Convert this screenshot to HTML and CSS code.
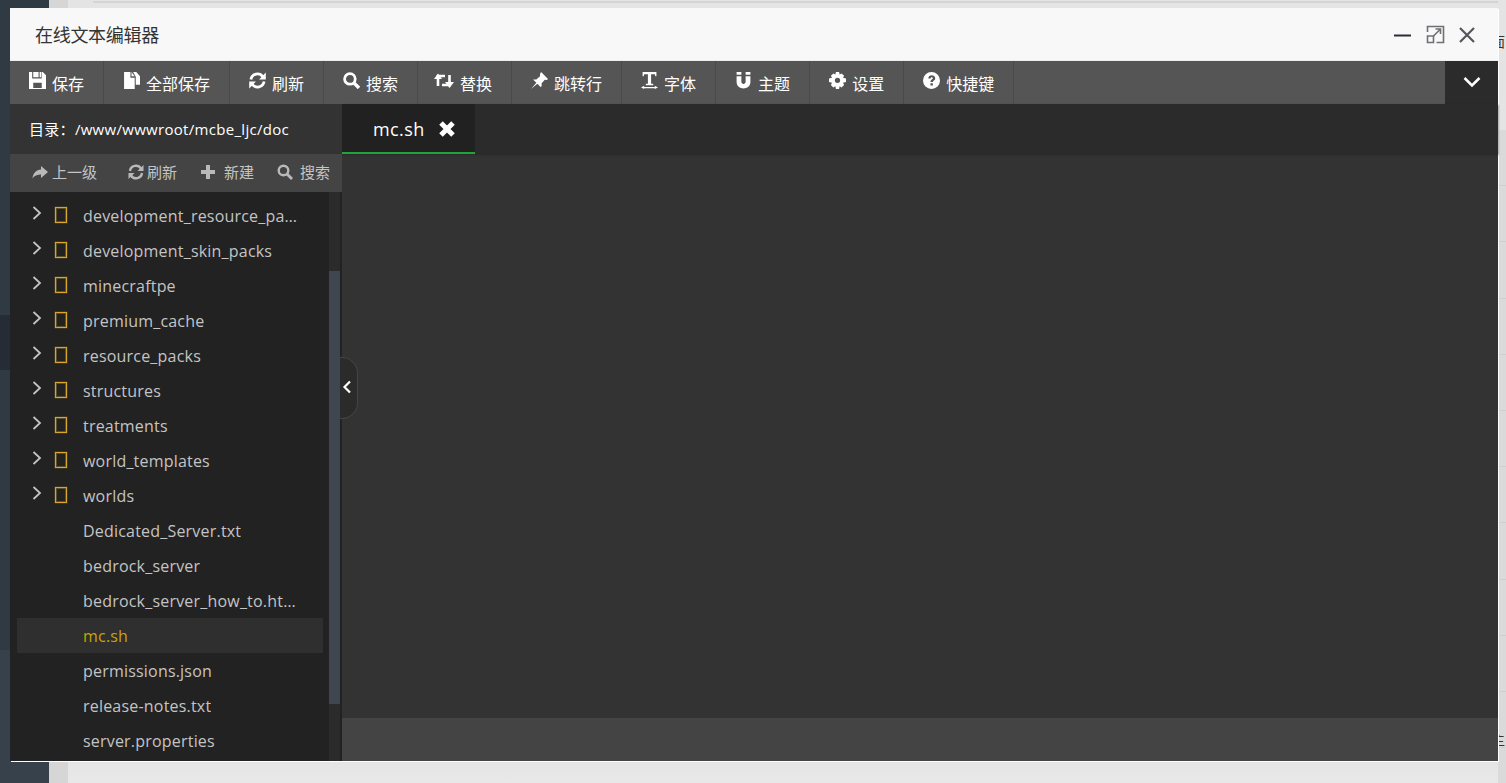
FILE: index.html
```html
<!DOCTYPE html>
<html lang="zh">
<head>
<meta charset="utf-8">
<title>在线文本编辑器</title>
<link rel="stylesheet" href="styles.css">
</head>
<body>
<div class="page">
  <div class="page-side"><div class="ps-a"></div><div class="ps-b"></div><div class="ps-c"></div><div class="ps-d"></div></div>
  <div class="page-gutter"></div>
  <div class="page-main"><div class="page-line"></div></div>
  <div class="page-right"><span class="frag frag-a">面</span><span class="frag frag-b">主</span></div>
</div>
<section class="win">
  <header class="titlebar">
    <span class="title">在线文本编辑器</span>
    <div class="winbtns">
      <svg class="wb" viewBox="0 0 20 20"><path d="M1 10.500H18" stroke="#2c2c38" stroke-width="2"/></svg>
      <svg class="wb" viewBox="0 0 20 20" fill="none" stroke="#6f7074" stroke-width="1.600"><path d="M2.500 7V1.500H18.500V17.500H11.500"/><path d="M2.500 11H8.500V17.500H2.500Z"/><path d="M8.500 11L15.500 4M10.500 4H15.500V9"/></svg>
      <svg class="wb" viewBox="0 0 20 20"><path d="M3 3L17 17M17 3L3 17" stroke="#55565c" stroke-width="2.200"/></svg>
    </div>
  </header>
  <nav class="menubar">
    <div class="menu">
      <a class="mi"><svg class="ic" viewBox="0 0 16 16"><path fill="#fff" fill-rule="evenodd" d="M0 0H3V6H12V0H13L16 3V16H0ZM4 0H9V5H4ZM10 0H11.500V5H10ZM4 10V15H12V10Z"/></svg>保存</a>
      <a class="mi"><svg class="ic" viewBox="0 0 16 16"><path fill="#fff" d="M1 0H7V5.500H11V16H1ZM8 0L11 4H8ZM12 0H12.500L16 4V12H12V4.500L9.500 0Z"/></svg>全部保存</a>
      <a class="mi"><svg class="ic" viewBox="0 0 16 16" fill="none" stroke="#fff" stroke-width="2.600"><path d="M1.800 7A6.200 6.200 0 0 1 13 4.500"/><path d="M14.200 9A6.200 6.200 0 0 1 3 11.500"/><path fill="#fff" stroke="none" d="M15.800 .5V7H9.500ZM.2 15.500V9H6.500Z"/></svg>刷新</a>
      <a class="mi"><svg class="ic" viewBox="0 0 16 16" fill="none" stroke="#fff"><circle cx="6.500" cy="6.500" r="5" stroke-width="2.600"/><path d="M10 10L15 15" stroke-width="3.200"/></svg>搜索</a>
      <a class="mi"><svg class="ic wide" viewBox="0 0 20 16" fill="none" stroke="#fff" stroke-width="2.600"><path d="M4 13.500V3.500H11"/><path d="M15.500 2.500V12.500H8"/><path fill="#fff" stroke="none" d="M0 6.500L4 1L8 6.500ZM11 9.500L15.500 15.500L20 9.500Z"/></svg>替换</a>
      <a class="mi"><svg class="ic" viewBox="0 0 16 16"><path fill="#fff" d="M9.500 0L16 6.500L14.800 7.500L13 7.200L10 10.500L10 13.500L9 14L2 7L5 7L8.500 4L8.500 1.800ZM5 10L6 11L0 16Z"/></svg>跳转行</a>
      <a class="mi"><svg class="ic" viewBox="0 0 16 16"><path fill="#fff" d="M1.500 0H14.500V4H13.500L13 2H9.500V11H11.500V12.500H4.500V11H6.500V2H3L2.500 4H1.500ZM0 14.500L3 13V14H13V13L16 14.500L13 16V15.200H3V16Z"/></svg>字体</a>
      <a class="mi"><svg class="ic" viewBox="0 0 16 16"><path fill="#fff" d="M1.500 0H6V2.500H1.500ZM10 0H14.500V2.500H10ZM1.500 4H6V9.500C6 11.800 10 11.800 10 9.500V4H14.500V9.500C14.500 17.500 1.500 17.500 1.500 9.500Z"/></svg>主题</a>
      <a class="mi"><svg class="ic" viewBox="0 0 16 16"><path fill="#fff" fill-rule="evenodd" d="M6.500 0H9.500L10 2.300L11.800 1.300L14.200 3.500L13.200 5.300L16 6V9.500L13.200 10.200L14.200 12.200L11.800 14.500L10 13.500L9.500 16H6.500L6 13.500L4 14.500L1.800 12.200L2.800 10.200L0 9.500V6L2.800 5.300L1.800 3.500L4.200 1.300L6 2.300ZM8 5.300A2.500 2.500 0 1 0 8 10.300A2.500 2.500 0 1 0 8 5.300Z"/></svg>设置</a>
      <a class="mi"><svg class="ic" viewBox="0 0 16 16"><path fill="#fff" fill-rule="evenodd" d="M8 0A8 8 0 1 0 8 16A8 8 0 1 0 8 0ZM5 6C5 2 11.500 2.300 11.500 5.800C11.500 8 9.300 8 9.300 9.500H7C7 7 9.200 7 9.200 5.800C9.200 4.600 7.200 4.700 7.200 6ZM7 10.500H9.300V12.800H7Z"/></svg>快捷键</a>
    </div>
    <button class="more"><svg viewBox="0 0 18 12" class="more-ic"><path d="M1.500 2L9 9.500L16.500 2" fill="none" stroke="#fff" stroke-width="2.500"/></svg></button>
  </nav>
  <div class="body">
    <aside class="side">
      <div class="path">目录：/www/wwwroot/mcbe_ljc/doc</div>
      <div class="tools">
        <a class="t t1"><svg class="tic" viewBox="0 0 16 16"><path fill="#b9b9b9" d="M9 2L16 8L9 14V10.500C5 10.500 2.500 11.500 .5 14.500C1 9 4.500 5.800 9 5.500Z"/></svg>上一级</a>
        <a class="t t2"><svg class="tic" viewBox="0 0 16 16" fill="none" stroke="#b9b9b9" stroke-width="2.400"><path d="M2 7A6 6 0 0 1 13 4.500"/><path d="M14 9A6 6 0 0 1 3 11.500"/><path fill="#b9b9b9" stroke="none" d="M15.500 1V7H9.500ZM.5 15V9H6.500Z"/></svg>刷新</a>
        <a class="t t3"><svg class="tic" viewBox="0 0 16 16"><path fill="#b9b9b9" d="M6 1H10V6H15V10H10V15H6V10H1V6H6Z"/></svg>新建</a>
        <a class="t t4"><svg class="tic" viewBox="0 0 16 16" fill="none" stroke="#b9b9b9"><circle cx="6.500" cy="6.500" r="4.800" stroke-width="2.400"/><path d="M10 10L15 15" stroke-width="2.800"/></svg>搜索</a>
      </div>
      <div class="tree-wrap">
        <ul class="tree">
          <li class="row"><svg class="chev" viewBox="0 0 10 14"><path d="M1.500 1L8 7L1.500 13" fill="none" stroke="#c4c4c4" stroke-width="1.800"/></svg><i class="folder"></i><span class="name">development_resource_packs</span></li>
          <li class="row"><svg class="chev" viewBox="0 0 10 14"><path d="M1.500 1L8 7L1.500 13" fill="none" stroke="#c4c4c4" stroke-width="1.800"/></svg><i class="folder"></i><span class="name">development_skin_packs</span></li>
          <li class="row"><svg class="chev" viewBox="0 0 10 14"><path d="M1.500 1L8 7L1.500 13" fill="none" stroke="#c4c4c4" stroke-width="1.800"/></svg><i class="folder"></i><span class="name">minecraftpe</span></li>
          <li class="row"><svg class="chev" viewBox="0 0 10 14"><path d="M1.500 1L8 7L1.500 13" fill="none" stroke="#c4c4c4" stroke-width="1.800"/></svg><i class="folder"></i><span class="name">premium_cache</span></li>
          <li class="row"><svg class="chev" viewBox="0 0 10 14"><path d="M1.500 1L8 7L1.500 13" fill="none" stroke="#c4c4c4" stroke-width="1.800"/></svg><i class="folder"></i><span class="name">resource_packs</span></li>
          <li class="row"><svg class="chev" viewBox="0 0 10 14"><path d="M1.500 1L8 7L1.500 13" fill="none" stroke="#c4c4c4" stroke-width="1.800"/></svg><i class="folder"></i><span class="name">structures</span></li>
          <li class="row"><svg class="chev" viewBox="0 0 10 14"><path d="M1.500 1L8 7L1.500 13" fill="none" stroke="#c4c4c4" stroke-width="1.800"/></svg><i class="folder"></i><span class="name">treatments</span></li>
          <li class="row"><svg class="chev" viewBox="0 0 10 14"><path d="M1.500 1L8 7L1.500 13" fill="none" stroke="#c4c4c4" stroke-width="1.800"/></svg><i class="folder"></i><span class="name">world_templates</span></li>
          <li class="row"><svg class="chev" viewBox="0 0 10 14"><path d="M1.500 1L8 7L1.500 13" fill="none" stroke="#c4c4c4" stroke-width="1.800"/></svg><i class="folder"></i><span class="name">worlds</span></li>
          <li class="row file"><span class="name">Dedicated_Server.txt</span></li>
          <li class="row file"><span class="name">bedrock_server</span></li>
          <li class="row file"><span class="name">bedrock_server_how_to.html</span></li>
          <li class="row file active"><span class="name">mc.sh</span></li>
          <li class="row file"><span class="name">permissions.json</span></li>
          <li class="row file"><span class="name">release-notes.txt</span></li>
          <li class="row file"><span class="name">server.properties</span></li>
        </ul>
        <div class="scroll"><div class="thumb"></div></div>
      </div>
      <button class="collapse"><svg viewBox="0 0 10 14" class="col-ic"><path d="M8 1.500L2.500 7L8 12.500" fill="none" stroke="#fff" stroke-width="2.200"/></svg></button>
    </aside>
    <main class="editor">
      <div class="tabs">
        <div class="tab">mc.sh<svg class="tab-x" viewBox="0 0 16 16"><path d="M3.200 3.200L12.800 12.800M12.800 3.200L3.200 12.800" stroke="#fff" stroke-width="4"/></svg></div>
      </div>
      <div class="code"></div>
      <div class="status"></div>
    </main>
  </div>
</section>
</body>
</html>
```
FILE: styles.css
```css
* { box-sizing: border-box; }
html, body { margin: 0; height: 100%; overflow: hidden; }
body { font-family: "Open Sans", "Noto Sans CJK SC", sans-serif; background: #e0e0e0; }
a { color: inherit; text-decoration: none; }
button { border: 0; padding: 0; cursor: pointer; }

.page { display: flex; height: 783px; }
.page-side { width: 49px; flex: none; display: flex; flex-direction: column; }
.ps-a { height: 315px; background: #303a43; }
.ps-b { height: 55px; background: #262c36; }
.ps-c { height: 280px; background: #2f3a43; }
.ps-d { flex: 1; background: #37414b; }
.page-gutter { width: 19px; flex: none; background: #d6d6d6; }
.page-main { flex: 1; background: linear-gradient(180deg, #e4e4e4, #dedede 90%, #e8e8e8); }
.page-line { height: 2px; margin: 1px 0 0 25px; background: #d4d4d4; }
.page-right { width: 8px; flex: none; overflow: hidden; display: flex; flex-direction: column; align-items: flex-start;
  background: repeating-linear-gradient(180deg, #dadada 0, #dadada 55.2px, #cfcfcf 55.2px, #cfcfcf 56.2px) 0 130px / 100% 100% no-repeat, #e4e4e4; }
.frag { font-size: 14px; line-height: 14px; color: #333; margin-left: -7px; font-family: "Noto Sans CJK SC", sans-serif; }
.frag-a { margin-top: 34px; }
.frag-b { margin-top: 684px; }

.win { position: absolute; left: 10px; top: 8px; width: 1488px; height: 753px; display: flex; flex-direction: column; background: #2b2b2b; box-shadow: 1px 1px 0 #fff; }
.titlebar { height: 53px; flex: none; display: flex; align-items: center; justify-content: space-between; padding: 0 21px 0 25px; background: #f8f8f8; border-bottom: 1px solid #eee; }
.title { font-size: 18px; color: #333; font-family: "Noto Sans CJK SC", sans-serif; line-height: 53px; letter-spacing: -.3px; }
.winbtns { display: flex; gap: 12px; align-items: center; padding-top: 1px; }
.wb { width: 20px; height: 20px; display: block; }

.menubar { height: 43px; flex: none; display: flex; justify-content: space-between; background: #2b2b2b; }
.menu { flex: 1; display: flex; background: #555; }
.mi { display: flex; align-items: center; padding: 0 19px 0 19px; border-right: 1px solid #4a4a4a; font-size: 16px; color: #fff; font-family: "Noto Sans CJK SC", sans-serif; height: 43px; }
.ic { width: 17px; height: 17px; margin: -4px 6px 0 0; flex: none; }
.ic.wide { width: 20px; margin: -4px 6px 0 -3px; }
.more { width: 53px; background: #2b2b2b; display: flex; align-items: center; justify-content: center; }
.more-ic { width: 18px; height: 12px; margin-top: -2px; }

.body { flex: 1; display: flex; min-height: 0; }
.side { width: 332px; flex: none; position: relative; display: flex; flex-direction: column; background: #222; }
.path { height: 50px; flex: none; background: #333; color: #fff; font-size: 15px; letter-spacing: .3px; line-height: 50px; padding-left: 19px; white-space: nowrap; }
.tools { height: 38px; flex: none; background: #444; color: #c4c4c4; font-size: 15px; display: flex; align-items: center; padding-bottom: 3px; font-family: "Noto Sans CJK SC", sans-serif; }
.t { display: flex; align-items: center; }
.tic { width: 16px; height: 16px; flex: none; }
.t1 { margin-left: 22px; gap: 4px; }
.t2 { margin-left: 31px; gap: 3px; }
.t3 { margin-left: 23px; gap: 8px; }
.t4 { margin-left: 23px; gap: 7px; }
.tree-wrap { flex: 1; min-height: 0; display: flex; overflow: hidden; }
.tree { list-style: none; margin: 0; padding: 6px 6px 0 7px; flex: 1; min-width: 0; overflow: hidden; }
.row { height: 35px; display: flex; align-items: center; color: #c4c4c4; font-size: 16px; letter-spacing: .2px; position: relative; padding-left: 15px; }
.row.file { padding-left: 66px; }
.chev { width: 10px; height: 14px; flex: none; margin-top: -6px; }
.folder { width: 12px; height: 16px; border: 1px solid #d6a52a; box-shadow: inset 0 0 0 1px rgba(214, 165, 42, .35), 0 0 0 .5px rgba(214, 165, 42, .3); margin: -2px 16px 0 13px; flex: none; }
.name { white-space: nowrap; overflow: hidden; text-overflow: ellipsis; max-width: 217px; }
.active { background: #2f2f2f; color: #c8a400; }
.scroll { width: 11px; margin-right: 2px; flex: none; background: #2b2b2b; padding-top: 79px; }
.thumb { height: 433px; background: #3f4650; }
.collapse { position: absolute; left: 330px; top: 253px; width: 18px; height: 62px; background: #2b2b2b; border: 1px solid #444; border-left: 0; border-radius: 0 16px 16px 0; display: flex; align-items: center; justify-content: center; padding: 0 4px 3px 0; }
.col-ic { width: 10px; height: 14px; flex: none; }

.editor { flex: 1; min-width: 0; display: flex; flex-direction: column; background: #333; }
.tabs { height: 50px; flex: none; display: flex; background: #2b2b2b; box-shadow: 0 1px 2px #2a2a2a; }
.tab { width: 133px; height: 50px; padding: 2px 0 0 31px; background: #212121; border-bottom: 2px solid #20a53a; color: #fff; font-size: 18px; letter-spacing: .4px; display: flex; align-items: center; gap: 12px; }
.tab-x { width: 20px; height: 20px; }
.code { flex: 1; }
.status { height: 43px; flex: none; background: #444; }
```
